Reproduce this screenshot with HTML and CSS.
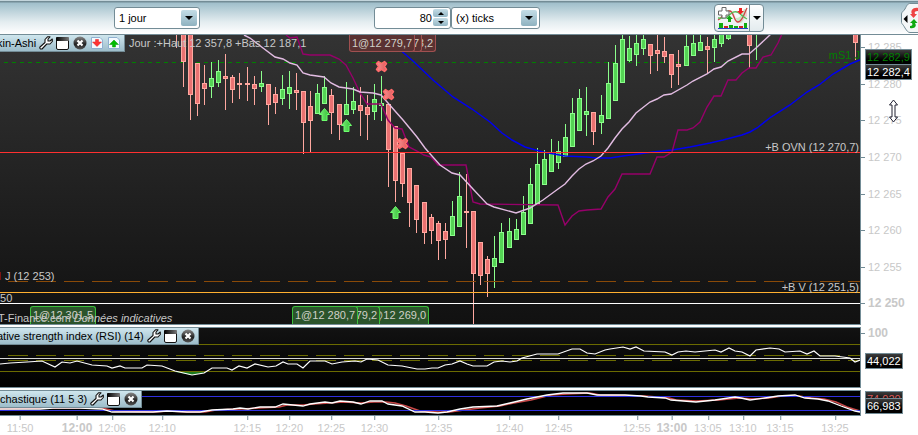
FILE: index.html
```
<!DOCTYPE html>
<html lang="fr">
<head>
<meta charset="UTF-8">
<meta name="viewport" content="width=device-width, initial-scale=1.0">
<title>Heikin-Ashi - 80 ticks</title>
<link rel="stylesheet" href="styles.css">
</head>
<body>

<!-- Shared icons -->
<svg class="icon-defs" aria-hidden="true">
  <defs>
    <linearGradient id="closeFill" x1="0" y1="0" x2="0" y2="1">
      <stop offset="0" stop-color="#888"/>
      <stop offset="0.6" stop-color="#222"/>
      <stop offset="1" stop-color="#555"/>
    </linearGradient>
    <linearGradient id="winFill" x1="0" y1="0" x2="1" y2="0">
      <stop offset="0" stop-color="#000"/>
      <stop offset="1" stop-color="#777"/>
    </linearGradient>
    <linearGradient id="greenFill" x1="0" y1="0" x2="1" y2="0">
      <stop offset="0" stop-color="#7be87b"/>
      <stop offset="1" stop-color="#30c030"/>
    </linearGradient>
    <linearGradient id="redFill" x1="0" y1="0" x2="1" y2="0">
      <stop offset="0" stop-color="#f79090"/>
      <stop offset="1" stop-color="#dc5c5c"/>
    </linearGradient>
  </defs>
  <symbol id="wrench" viewBox="0 0 14 14">
    <path d="M1 11 L6 6.500 V3.500 L8.500 0.800 H11 L9 3 V5 H11 L13.300 3 V5.500 L11 8 H7.800 L3 13 H1.500 L0.700 12Z" fill="#fff" stroke="#111" stroke-width="1.1" stroke-linejoin="round"/>
  </symbol>
  <symbol id="window" viewBox="0 0 14 14">
    <rect x="0.5" y="1.5" width="12" height="12" rx="1.5" fill="#fff" stroke="#111"/>
    <rect x="0" y="1" width="13" height="4" rx="1" fill="url(#winFill)"/>
  </symbol>
  <symbol id="close" viewBox="0 0 14 14">
    <circle cx="7" cy="7" r="6.5" fill="url(#closeFill)"/>
    <path d="M4.5 4.5 L9.5 9.5 M9.5 4.5 L4.5 9.5" stroke="#fff" stroke-width="2.2"/>
  </symbol>
  <symbol id="sell" viewBox="0 0 14 14">
    <path d="M1.5 1.5 H10 L12.500 4 V12.500 H1.500Z" fill="#f4faff" stroke="#8fb0d0"/>
    <path d="M5.500 3.500 H8.500 V6 H11.500 L7 10.500 L2.500 6 H5.500Z" fill="#f33" stroke="#d22" stroke-width="0.5"/>
  </symbol>
  <symbol id="buy" viewBox="0 0 14 14">
    <path d="M1.5 1.5 H10 L12.500 4 V12.500 H1.500Z" fill="#f4faff" stroke="#8fb0d0"/>
    <path d="M5.500 11 H8.500 V8.500 H11.500 L7 4 L2.500 8.500 H5.500Z" fill="#0b0" stroke="#090" stroke-width="0.5"/>
  </symbol>
</svg>

<header class="toolbar">
  <div class="dropdown period">
    <select aria-label="Période">
      <option>1 jour</option>
    </select>
    <span class="dropdown-arrow"></span>
  </div>

  <div class="units">
    <div class="stepper">
      <input type="text" inputmode="numeric" value="80" aria-label="Nombre de ticks">
      <div class="stepper-buttons">
        <button type="button" class="up" aria-label="Plus"></button>
        <button type="button" class="down" aria-label="Moins"></button>
      </div>
    </div>
    <div class="dropdown ticks">
      <select aria-label="Unité">
        <option>(x) ticks</option>
      </select>
      <span class="dropdown-arrow"></span>
    </div>
  </div>

  <div class="indicators">
    <button type="button" class="add-indicator" aria-label="Ajouter un indicateur">
      <svg width="32" height="24" viewBox="0 0 32 24">
        <path d="M1 14 C6 14 8 5 13 5 C19 5 18 18 24 17 C27 16 28 8 30 4 L27 3 C25 8 23 12 20 12 C17 12 16 4 12 4 C7 4 5 12 1 13Z" fill="#b9e6b9" opacity="0.8"/>
        <path d="M14 5 C18 5 18 16 21 16 C26 16 27 7 30 2 V10 C27 12 25 17 21 17 C17 16 16 8 12 5Z" fill="#ecc" opacity="0.9"/>
        <path d="M1 14 C6 12 8 4 13 5 C17 6 17 16 21 16 C26 15 27 7 30 2" fill="none" stroke="#c44" stroke-width="1.3"/>
        <path d="M1 12 C5 12 7 13 10 11 C15 7 16 5 20 6 C24 8 26 11 30 13" fill="none" stroke="#5b5" stroke-width="1.3"/>
        <path d="M5 1.5 H9 V5 H12 V9 H9 V12 H5 V9 H1.5 V5 H5Z" fill="#fff" stroke="#666"/>
        <path d="M22 2 H25 V5 H27 L23.5 8.5 L20 5 H22Z" fill="#e22"/>
        <path d="M12.5 9.5 L16 13 H14 V16 H11 V13 H9Z" fill="#1a1"/>
        <path d="M2 17 H6 V22 H2Z M12 19 H16 V22 H12Z M17 20 H21 V22 H17Z M27 17 H30 V22 H27Z" fill="#1a1"/>
        <path d="M7 20 H11 V22 H7Z M22 20 H26 V22 H22Z" fill="#c22"/>
        <path d="M1 22.5 H31" stroke="#24c"/>
      </svg>
    </button>
    <button type="button" class="more" aria-label="Plus d'indicateurs"></button>
  </div>

  <button type="button" class="side-tab" aria-label="Ouvrir le panneau d'ordres">
    <svg width="17" height="30" viewBox="0 0 17 30">
      <path d="M17 0.5 H9 C7 0.5 6 2 4 6 C2 9 0.5 9 0.5 11 V19 C0.5 21 2 21 4 25 C6 28 7 29.5 9 29.5 H17" fill="#f4f7f8" stroke="#738c96"/>
      <path d="M6.5 12 V20 L2.5 16Z" fill="#000"/>
      <path d="M17 5 C12 4 9 8 11 11 H9 L12.500 15 L16 11 H14 C13 9 14 8 17 8Z" fill="#e44"/>
      <path d="M9 25 C14 26 16 23 14 20 H16.500 L13 16 L9 20 H11 C12 22 11 23 9 23Z" fill="#1a1"/>
    </svg>
  </button>
</header>

<main class="charts">
  <section class="row row-price">
    <div class="panel price">
      <svg class="plot" id="price-plot" viewBox="0 35 860 289" preserveAspectRatio="none"></svg>
      <span class="info">Jour :+Haut 12 357,8 +Bas 12 187,1</span>
      <div class="panel-title">
        <span>kin-Ashi</span>
        <button type="button" aria-label="Configurer"><svg><use href="#wrench"/></svg></button>
        <button type="button" aria-label="Agrandir"><svg><use href="#window"/></svg></button>
        <button type="button" aria-label="Fermer"><svg><use href="#close"/></svg></button>
        <button type="button" aria-label="Vendre"><svg><use href="#sell"/></svg></button>
        <button type="button" aria-label="Acheter"><svg><use href="#buy"/></svg></button>
      </div>
      <div id="tags"></div>
      <span class="level level-s1">mS1 J</span>
      <span class="level level-ovn">+B OVN (12 270,7)</span>
      <span class="level level-v">+B V (12 251,5)</span>
      <span class="level level-j">J (12 253)</span>
      <span class="level level-250">250</span>
      <span class="watermark">T-Finance.com <em>Données indicatives</em></span>
    </div>
    <div class="scale" id="price-scale">
      <span class="value value-s1">12 282,9</span>
      <span class="value value-last">12 282,4</span>
      <svg class="cursor" width="11" height="24" viewBox="0 0 11 24">
        <path d="M5.5 1 L9.500 6 H7 V18 H9.500 L5.500 23 L1.500 18 H4 V6 H1.500Z" fill="#fff" stroke="#223"/>
      </svg>
    </div>
  </section>

  <section class="row row-rsi">
    <div class="panel rsi">
      <svg class="plot" id="rsi-plot" viewBox="0 328 860 59" preserveAspectRatio="none"></svg>
      <div class="panel-title">
        <span>ative strength index (RSI) (14)</span>
        <button type="button" aria-label="Configurer"><svg><use href="#wrench"/></svg></button>
        <button type="button" aria-label="Agrandir"><svg><use href="#window"/></svg></button>
        <button type="button" aria-label="Fermer"><svg><use href="#close"/></svg></button>
      </div>
    </div>
    <div class="scale" id="rsi-scale">
      <span class="value value-rsi">44,022</span>
    </div>
  </section>

  <section class="row row-stoch">
    <div class="panel stoch">
      <svg class="plot" id="stoch-plot" viewBox="0 391 860 24" preserveAspectRatio="none"></svg>
      <div class="panel-title">
        <span>chastique (11 5 3)</span>
        <button type="button" aria-label="Configurer"><svg><use href="#wrench"/></svg></button>
        <button type="button" aria-label="Agrandir"><svg><use href="#window"/></svg></button>
        <button type="button" aria-label="Fermer"><svg><use href="#close"/></svg></button>
      </div>
    </div>
    <div class="scale">
      <span class="value value-signal">74,020</span>
      <span class="value value-stoch">66,983</span>
    </div>
  </section>

  <div class="row">
    <div class="time-axis" id="time-axis"></div>
    <div class="scale"></div>
  </div>
</main>

<script src="chart.js"></script>
</body>
</html>
```

FILE: styles.css
```
* {
  box-sizing: border-box;
}

body {
  margin: 0;
  background: #fff;
  font-family: "Liberation Sans", Arial, sans-serif;
  font-size: 11px;
  line-height: 14px;
  color: #000;
  overflow: hidden;
}

button {
  padding: 0;
  border: 0;
  background: none;
  font: inherit;
  cursor: pointer;
}

.icon-defs {
  position: absolute;
  width: 0;
  height: 0;
}

/* Toolbar */
.toolbar {
  display: flex;
  align-items: center;
  height: 35px;
  padding-left: 114px;
  padding-top: 1px;
  border-bottom: 1px solid #738c96;
  background: linear-gradient(#c3d5dc 0, #c3d5dc 1px, #738c96 1px, #738c96 2px, #a0bfcb 3px, #e4edf0 22px, #fff 34px);
}

.dropdown {
  position: relative;
  height: 22px;
}

.period {
  width: 86px;
}

.ticks {
  width: 89px;
}

.dropdown select,
.stepper {
  border: 1px solid #738c96;
  border-radius: 3px;
  background: #fff;
}

.dropdown select {
  width: 100%;
  height: 22px;
  padding: 0 4px;
  appearance: none;
  font: inherit;
  color: #000;
}

.dropdown-arrow {
  position: absolute;
  top: 3px;
  right: 3px;
  width: 16px;
  height: 16px;
  border-radius: 2px;
  background: linear-gradient(#c4dde6, #8fb2c0);
  pointer-events: none;
}

.dropdown-arrow::after,
.more::after,
.up::after,
.down::after {
  content: "";
  display: block;
  width: 0;
  margin: 0 auto;
  border: 4px solid transparent;
  border-top-color: #000;
  border-bottom: 0;
}

.dropdown-arrow::after {
  margin-top: 6px;
}

.units {
  display: flex;
  margin-left: 174px;
}

.stepper {
  display: flex;
  align-items: center;
  width: 77px;
  height: 22px;
  padding-right: 2px;
}

.stepper input {
  flex: 1;
  min-width: 0;
  padding: 0 1px;
  border: 0;
  background: none;
  font: inherit;
  text-align: right;
}

.stepper-buttons {
  display: flex;
  flex-direction: column;
  gap: 1px;
}

.stepper-buttons button {
  width: 15px;
  height: 8px;
  border-radius: 2px;
  background: linear-gradient(#c4dde6, #94b6c4);
}

.up::after,
.down::after {
  border-width: 3px;
  border-bottom-width: 0;
}

.up::after {
  transform: rotate(180deg);
}

.indicators {
  display: flex;
  width: 50px;
  height: 28px;
  margin-left: 174px;
  border: 1px solid #738c96;
  border-radius: 4px;
  background: linear-gradient(#fff, #e3ebee);
}

.add-indicator {
  width: 35px;
  border-right: 1px solid #738c96;
}

.add-indicator svg {
  display: block;
  margin-left: 2px;
}

.more {
  flex: 1;
}

.side-tab {
  margin-left: auto;
}

.side-tab svg {
  display: block;
}

/* Chart rows */
.charts {
  display: flex;
  flex-direction: column;
}

.row {
  display: flex;
}

.row-price,
.row-rsi {
  margin-bottom: 2px;
}

.panel {
  position: relative;
  flex: 1;
  min-width: 0;
  overflow: hidden;
  border: 1px solid #738c96;
  border-left: 0;
}

.price {
  height: 290px;
  border-top: 0;
  background: linear-gradient(#333, #111);
}

.rsi {
  height: 61px;
  background: linear-gradient(#121212, #000);
}

.stoch {
  height: 26px;
  background: #000;
}

.plot {
  position: absolute;
  top: 0;
  left: 0;
  width: 100%;
  height: 100%;
}

.panel-title {
  position: absolute;
  top: 0;
  left: 0;
  display: flex;
  align-items: center;
  gap: 3px;
  height: 17px;
  padding-right: 3px;
  border-right: 1px solid #738c96;
  border-bottom: 1px solid #738c96;
  background: linear-gradient(#cfe6ee, #9dbdca);
  white-space: nowrap;
}

.price .panel-title span,
.rsi .panel-title span {
  margin-left: -3px;
}

.panel-title button,
.panel-title svg {
  display: block;
  width: 14px;
  height: 14px;
}

.info {
  position: absolute;
  top: 1px;
  left: 129px;
  color: #c8c8c8;
  white-space: nowrap;
}

.level {
  position: absolute;
  right: 1px;
  color: #c8c8c8;
  white-space: nowrap;
}

.level-s1 {
  top: 13px;
  right: 0;
  color: #008000;
}

.level-ovn {
  top: 105px;
}

.level-v {
  top: 245px;
}

.level-j {
  top: 234px;
  right: auto;
  left: 5px;
}

.level-250 {
  top: 256px;
  right: auto;
  left: -6px;
}

.watermark {
  position: absolute;
  left: -2px;
  bottom: -1px;
  color: #c8c8c8;
  white-space: nowrap;
}

/* Executed order tags */
.tag {
  position: absolute;
  width: 66px;
  height: 18px;
  padding-left: 2px;
  line-height: 17px;
  color: #d0d0c8;
  white-space: nowrap;
  transform: translateX(-100%);
}

.tag-buy {
  bottom: 0;
  border: 1px solid #3cbe3c;
  border-bottom: 0;
  border-radius: 3px 3px 0 0;
  background: #2b542b;
}

.tag-sell {
  top: 0;
  height: 17px;
  line-height: 16px;
  border: 1px solid #a05050;
  border-top: 0;
  border-radius: 0 0 3px 3px;
  background: #5a3232;
}

/* Scales */
.scale {
  position: relative;
  flex: 0 0 57px;
  color: #c8c8c8;
}

.scale-label {
  position: absolute;
  left: 0;
  padding-left: 7px;
  transform: translateY(-50%);
  white-space: nowrap;
}

.scale-label::before {
  content: "";
  position: absolute;
  top: 7px;
  left: 0;
  width: 4px;
  height: 1px;
  background: #738c96;
}

.major {
  font-size: 12px;
  font-weight: bold;
}

.value {
  position: absolute;
  left: 4px;
  height: 16px;
  padding: 0 1px;
  border: 1px solid #738c96;
  background: linear-gradient(#3c3c3c, #000 70%);
  color: #fff;
  white-space: nowrap;
}

.value-s1 {
  top: 14px;
  color: #008000;
}

.value-last {
  top: 29px;
}

.value-rsi {
  top: 26px;
}

.value-signal {
  top: 1px;
  color: #d85858;
}

.value-stoch {
  top: 8px;
}

.cursor {
  position: absolute;
  top: 64px;
  left: 27px;
}

.time-axis {
  position: relative;
  flex: 1;
  height: 19px;
  color: #c8c8c8;
}

.time-label {
  position: absolute;
  top: 0;
  padding-top: 5px;
  transform: translateX(-50%);
  white-space: nowrap;
}

.time-label::before {
  content: "";
  position: absolute;
  top: 0;
  left: 50%;
  width: 1px;
  height: 4px;
  background: #738c96;
}

/* Plot shapes */
.line {
  fill: none;
  stroke-width: 1;
}

.crisp {
  shape-rendering: crispEdges;
}

.candle-up {
  fill: #55d455;
  stroke: #8cff8c;
}

.candle-down {
  fill: #ea7272;
  stroke: #ffa8a0;
}
```

FILE: chart.js
```
const SVG_NS = 'http://www.w3.org/2000/svg';
const PLOT_WIDTH = 860;

// x, high, low, body top, body bottom, direction (1 up, 0 down)
const candles = [
  [176, 30, 48, 30, 33, 0], [183, 30, 87, 30, 62, 0], [190, 30, 120, 30, 95, 0],
  [197, 63, 116, 63, 104, 0], [204, 65, 105, 83, 89, 0], [211, 62, 98, 78, 87, 1],
  [218, 60, 87, 71, 83, 1], [225, 54, 110, 76, 79, 0], [232, 75, 103, 77, 90, 0],
  [239, 73, 99, 83, 85, 0], [247, 67, 101, 83, 85, 0], [254, 76, 105, 84, 89, 0],
  [261, 71, 92, 83, 87, 1], [268, 84, 125, 84, 105, 0], [275, 87, 114, 94, 103, 0],
  [282, 75, 105, 89, 99, 1], [289, 71, 109, 87, 94, 1], [296, 73, 110, 90, 93, 0],
  [303, 91, 154, 91, 123, 0], [310, 91, 152, 106, 121, 0], [317, 84, 114, 93, 114, 1],
  [324, 76, 104, 87, 104, 1], [331, 89, 134, 95, 113, 0], [339, 104, 140, 104, 125, 0],
  [346, 82, 115, 104, 115, 1], [353, 87, 114, 101, 110, 1], [360, 87, 136, 105, 111, 0],
  [367, 95, 140, 107, 115, 0], [374, 84, 120, 99, 112, 1], [381, 76, 121, 103, 106, 1],
  [388, 104, 187, 104, 150, 0], [395, 126, 202, 126, 181, 0], [402, 153, 197, 153, 184, 0],
  [409, 168, 227, 168, 203, 0], [416, 185, 233, 185, 220, 0], [424, 202, 244, 202, 233, 0],
  [431, 214, 244, 217, 231, 0], [438, 221, 260, 223, 241, 0], [445, 223, 259, 231, 240, 0],
  [452, 201, 236, 216, 236, 1], [459, 172, 227, 196, 227, 1], [466, 174, 248, 211, 213, 0],
  [473, 211, 324, 211, 274, 0], [480, 242, 285, 242, 276, 0], [487, 256, 297, 259, 274, 0],
  [494, 236, 288, 258, 267, 1], [501, 223, 263, 232, 263, 1], [509, 218, 248, 231, 248, 1],
  [516, 219, 240, 229, 240, 1], [523, 196, 235, 212, 235, 1], [530, 168, 224, 184, 224, 1],
  [537, 148, 204, 164, 204, 1], [544, 150, 185, 159, 185, 1], [551, 139, 172, 153, 172, 1],
  [558, 141, 169, 151, 163, 1], [565, 124, 157, 137, 157, 1], [572, 98, 147, 113, 147, 1],
  [579, 89, 131, 98, 131, 1], [586, 87, 136, 111, 115, 1], [593, 112, 145, 112, 132, 0],
  [601, 95, 134, 115, 123, 1], [608, 62, 119, 83, 119, 1], [615, 45, 101, 63, 101, 1],
  [622, 30, 83, 39, 83, 1], [629, 36, 62, 48, 61, 1], [636, 30, 66, 43, 55, 1],
  [643, 30, 55, 39, 49, 1], [650, 44, 74, 44, 56, 0], [657, 30, 71, 50, 54, 0],
  [664, 37, 63, 51, 57, 0], [671, 54, 88, 54, 75, 0], [678, 50, 85, 64, 67, 0],
  [686, 30, 66, 46, 66, 1], [693, 30, 56, 43, 56, 1], [700, 30, 51, 42, 51, 1],
  [707, 37, 74, 46, 50, 0], [714, 30, 62, 39, 48, 1], [721, 30, 47, 30, 44, 1],
  [728, 30, 40, 30, 39, 1], [749, 30, 68, 30, 46, 0], [756, 30, 60, 30, 33, 1],
  [855, 30, 60, 30, 43, 0]
];

const movingAverage = '244,35 250,38 263,48 275,57 283,59 290,63 297,65 303,73 310,75 324,77 331,83 339,87 353,89 360,92 373,93 381,95 388,103 395,111 403,120 417,137 425,148 432,156 440,165 452,173 460,175 473,189 487,204 494,207 516,213 530,208 543,200 558,189 565,184 572,176 579,169 586,164 593,161 601,156 608,148 615,138 622,129 629,122 636,113 650,102 657,99 664,95 671,94 687,85 693,81 707,74 714,69 721,67 728,61 742,54 749,54 756,48 771,34';
const baseLine = '286,35 290,38 297,37 303,54 310,55 330,55 339,59 346,65 353,78 360,93 367,104 381,104 388,120 395,128 402,129 409,147 417,151 424,155 431,157 438,165 466,165 473,202 480,204 558,205 565,225 572,216 579,211 587,210 601,209 608,197 615,189 622,174 650,174 657,157 664,157 672,152 678,130 687,130 693,128 700,122 707,107 714,96 721,96 728,80 736,80 742,73 749,68 756,68 763,57 771,55 778,43 782,34';
const slowAverage = '383,35 413,61 433,80 453,97 472,109 490,122 502,133 512,140 525,147 543,152 565,156 587,157 597,158 610,158 623,156 653,152 672,150 690,147 710,143 723,140 742,135 750,132 757,128 771,117 790,105 807,92 819,85 833,74 850,64 860,60';
const rsiLine = '0,364 10,363 27,362 42,361 55,367 62,362 70,363 77,361 92,365 107,366 112,368 120,366 125,368 142,368 147,365 162,366 175,371 192,375 204,373 212,368 227,368 232,370 239,366 247,368 255,364 268,367 276,366 283,362 288,364 297,364 303,368 310,361 325,361 332,364 342,362 355,361 361,362 367,359 378,360 388,365 402,366 417,369 425,369 432,368 438,368 445,365 452,364 460,361 467,364 473,366 487,366 494,362 502,361 510,362 517,361 522,358 537,354 558,354 572,349 580,349 587,353 595,354 605,350 610,349 623,347 630,349 636,347 644,351 665,352 672,355 678,352 686,351 695,352 715,350 721,352 729,348 735,351 742,352 750,356 756,350 770,348 779,349 785,352 800,351 807,354 814,351 820,356 835,356 850,358 855,362 860,360';
const stochLine = '0,409 40,409 53,408 80,408 102,409 112,412 153,412 167,411 187,412 200,412 212,410 233,409 240,408 248,409 260,407 275,407 283,404 303,406 310,404 325,402 332,403 340,401 353,402 361,404 370,401 382,401 388,404 402,406 415,412 425,412 438,413 447,412 460,409 473,407 497,406 510,403 527,399 547,395 563,393 587,393 597,395 625,395 641,396 648,397 665,398 671,400 696,402 715,400 735,397 741,398 750,400 765,398 778,396 795,395 805,398 818,399 828,401 841,406 855,411 860,412';
const signalLine = '0,409 60,408 102,408 115,411 153,412 170,411 187,412 205,412 216,410 240,409 260,408 279,407 287,405 303,405 314,404 329,403 344,402 361,403 374,402 386,402 395,403 406,406 420,411 438,412 450,412 464,410 480,408 500,406 514,403 531,400 551,395 567,394 590,393 600,395 645,396 669,398 676,400 696,401 719,400 739,398 754,399 769,398 782,396 799,396 811,398 824,399 836,402 847,407 860,411';

const priceLabels = [
  ['12 285', 47], ['12 280', 84], ['12 275', 120], ['12 270', 157],
  ['12 265', 194], ['12 260', 230], ['12 255', 267], ['12 250', 303, true]
];

const timeLabels = [
  ['11:50', 20], ['12:00', 77, true], ['12:06', 112], ['12:10', 162], ['12:15', 247],
  ['12:20', 289], ['12:25', 331], ['12:30', 374], ['12:35', 438], ['12:40', 509],
  ['12:45', 558], ['12:55', 636], ['13:00', 671, true], ['13:05', 707],
  ['13:10', 742], ['13:15', 779], ['13:25', 834]
];

const orders = [
  ['1@12 301,5', 96, 'buy'],
  ['1@12 269,0', 429, 'buy'], ['1@12 279,2', 380, 'buy'], ['1@12 280,7', 358, 'buy'],
  ['1@12 278,2', 436, 'sell'], ['1@12 279,7', 422, 'sell'], ['1@12 279,7', 415, 'sell']
];

function draw(parent, name, attrs) {
  const el = document.createElementNS(SVG_NS, name);
  for (const key in attrs) {
    el.setAttribute(key, attrs[key]);
  }
  parent.appendChild(el);
  return el;
}

function hLine(svg, y, stroke, dash, offset) {
  draw(svg, 'line', {
    class: 'crisp', x1: offset || 0, x2: PLOT_WIDTH, y1: y + 0.5, y2: y + 0.5,
    stroke: stroke, 'stroke-dasharray': dash || 'none'
  });
}

function polyline(svg, points, stroke, width) {
  draw(svg, 'polyline', { class: 'line', points: points, stroke: stroke, style: width ? 'stroke-width:' + width : '' });
}

function drawCandle(svg, [x, high, low, top, bottom, up]) {
  const g = draw(svg, 'g', { class: 'crisp ' + (up ? 'candle-up' : 'candle-down') });
  draw(g, 'line', { x1: x + 0.5, x2: x + 0.5, y1: high, y2: low });
  draw(g, 'rect', { x: x - 1.5, y: top + 0.5, width: 4, height: Math.max(bottom - top - 1, 1) });
}

function drawArrow(svg, x, y) {
  draw(svg, 'path', {
    d: `M${x} ${y} l5 6 h-2.5 v6 h-5 v-6 h-2.5 Z`,
    fill: 'url(#greenFill)', stroke: '#6dff6d'
  });
}

function drawCross(svg, x, y) {
  draw(svg, 'path', {
    d: `M${x - 5} ${y - 3} l2 -2 3 2 3 -2 2 2 -2 3 2 3 -2 2 -3 -2 -3 2 -2 -2 2 -3 Z`,
    fill: 'url(#redFill)', stroke: '#ff6b6b', 'stroke-width': 1.5, 'stroke-linejoin': 'round'
  });
}

function drawPrice() {
  const svg = document.getElementById('price-plot');
  hLine(svg, 62, '#008000', '4 4', 4);
  candles.forEach(candle => drawCandle(svg, candle));
  hLine(svg, 281, '#8a4a08', '20 8', 8);
  polyline(svg, slowAverage, '#0000f0', 1.5);
  polyline(svg, baseLine, '#96006a', 1.4);
  polyline(svg, movingAverage, '#e2bce2', 1.4);
  hLine(svg, 152, '#ff3030');
  hLine(svg, 292, '#ffb030');
  hLine(svg, 303, '#fff');
  draw(svg, 'rect', { x: 0, y: 272, width: 1, height: 8, fill: '#7a1414' });
  [[324, 108], [346, 119], [395, 206]].forEach(([x, y]) => drawArrow(svg, x + 0.5, y + 0.5));
  [[381, 66], [388, 94], [402, 143]].forEach(([x, y]) => drawCross(svg, x + 0.5, y + 0.5));
}

function drawRsi() {
  const svg = document.getElementById('rsi-plot');
  hLine(svg, 344, '#6b6b00');
  hLine(svg, 371, '#6b6b00');
  hLine(svg, 355, '#6b6b00', '20 8', 8);
  hLine(svg, 360, '#6b6b00', '20 8', 8);
  draw(svg, 'path', { d: 'M175 372 L192 375 L207 372 Z', fill: '#1c7a1c' });
  hLine(svg, 358, '#d8d8d8');
  polyline(svg, rsiLine, '#fff', 1.2);
}

function drawStoch() {
  const svg = document.getElementById('stoch-plot');
  polyline(svg, signalLine, '#c84848', 1.5);
  hLine(svg, 396, '#3030e0');
  hLine(svg, 410, '#3030e0');
  polyline(svg, stochLine, '#fff', 1.3);
}

function addLabel(parent, className, text, major) {
  const label = document.createElement('span');
  label.className = className + (major ? ' major' : '');
  label.textContent = text;
  parent.appendChild(label);
  return label;
}

function addLabels() {
  const scale = document.getElementById('price-scale');
  priceLabels.slice().reverse().forEach(([text, y, major]) => {
    const label = addLabel(scale, 'scale-label', text, major);
    label.style.top = (y - 35) + 'px';
    scale.prepend(label);
  });
  addLabel(document.getElementById('rsi-scale'), 'scale-label', '100', true).style.top = '6px';

  const axis = document.getElementById('time-axis');
  timeLabels.forEach(([text, x, major]) => {
    addLabel(axis, 'time-label', text, major).style.left = (x / PLOT_WIDTH * 100) + '%';
  });

  const tags = document.getElementById('tags');
  orders.forEach(([text, x, side]) => {
    addLabel(tags, 'tag tag-' + side, text).style.left = (x / PLOT_WIDTH * 100) + '%';
  });
}

drawPrice();
drawRsi();
drawStoch();
addLabels();
```
